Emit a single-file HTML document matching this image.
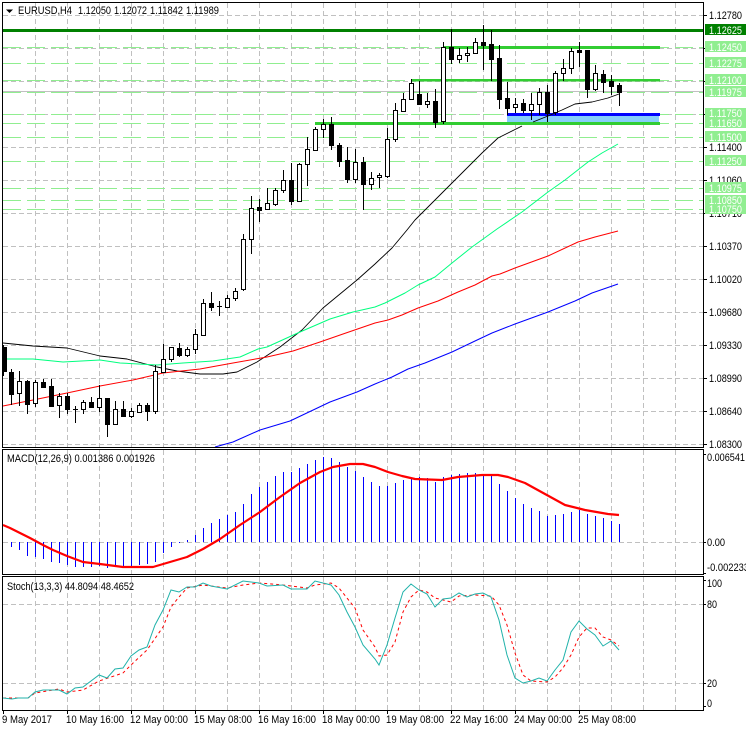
<!DOCTYPE html>
<html><head><meta charset="utf-8"><title>EURUSD,H4</title>
<style>
html,body{margin:0;padding:0;background:#fff;width:746px;height:731px;overflow:hidden}
svg{display:block}
text{font-family:"Liberation Sans",sans-serif;font-size:11px;fill:#000}
.w{fill:#fff}
</style></head><body>
<svg width="746" height="731" viewBox="0 0 746 731" xmlns="http://www.w3.org/2000/svg">
<rect width="746" height="731" fill="#fff"/>
<!-- grid -->
<g fill="none" stroke="#c0c0c0" stroke-dasharray="5 3" shape-rendering="crispEdges">
<path d="M35.5 3V447M67.5 3V447M99.5 3V447M131.5 3V447M163.5 3V447M195.5 3V447M227.5 3V447M259.5 3V447M291.5 3V447M323.5 3V447M355.5 3V447M387.5 3V447M419.5 3V447M451.5 3V447M483.5 3V447M515.5 3V447M547.5 3V447M579.5 3V447M611.5 3V447M643.5 3V447M675.5 3V447"/>
<path d="M35.5 450V574M67.5 450V574M99.5 450V574M131.5 450V574M163.5 450V574M195.5 450V574M227.5 450V574M259.5 450V574M291.5 450V574M323.5 450V574M355.5 450V574M387.5 450V574M419.5 450V574M451.5 450V574M483.5 450V574M515.5 450V574M547.5 450V574M579.5 450V574M611.5 450V574M643.5 450V574M675.5 450V574"/>
<path d="M35.5 577V710M67.5 577V710M99.5 577V710M131.5 577V710M163.5 577V710M195.5 577V710M227.5 577V710M259.5 577V710M291.5 577V710M323.5 577V710M355.5 577V710M387.5 577V710M419.5 577V710M451.5 577V710M483.5 577V710M515.5 577V710M547.5 577V710M579.5 577V710M611.5 577V710M643.5 577V710M675.5 577V710"/>
<path d="M3 15.5H703M3 48.5H703M3 81.5H703M3 114.5H703M3 147.5H703M3 180.5H703M3 213.5H703M3 246.5H703M3 279.5H703M3 312.5H703M3 345.5H703M3 378.5H703M3 411.5H703M3 444.5H703"/>
<path d="M3 542.5H703M3 604.5H703M3 683.5H703"/>
</g>
<!-- light green dashed levels -->
<path fill="none" stroke="#90ee90" stroke-dasharray="18 6" shape-rendering="crispEdges" d="M3 47.5H703M3 63.5H703M3 80.5H703M3 92.5H703M3 114.5H703M3 123.5H703M3 137.5H703M3 161.5H703M3 188.5H703M3 200.5H703M3 209.5H703"/>
<!-- bid line -->
<path stroke="#c0c0c0" shape-rendering="crispEdges" d="M3 91.5H703"/>
<!-- objects -->
<rect x="507" y="115" width="152" height="8" fill="#87cefa"/>
<rect x="3" y="29" width="700" height="3" fill="#008000"/>
<rect x="444" y="46" width="216" height="3" fill="#32cd32"/>
<rect x="411" y="79" width="249" height="2.5" fill="#32cd32"/>
<rect x="507" y="113" width="153" height="3" fill="#0000ff"/>
<rect x="315" y="122" width="345" height="3" fill="#32cd32"/>
<!-- moving averages -->
<g fill="none" stroke-linejoin="round">
<path stroke="#000" stroke-width="0.9" d="M3 343L33 346L67 348L100 356L127 359L157 367L177 371L200 374L223 374L237 372L257 362L280 347L302 330L323 308L357 280L375 264L392 248L407 230L415 220L433 202L455 180L482 153L498 138L522 126M533 122L548 116L562 110L575 104L592 102L608 98L619 94"/>
<path stroke="#00ff7f" stroke-width="1" d="M3 359L33 359L63 362L100 360L120 363L157 365L183 363L213 361L240 357L258 349L267 347L300 332L330 319L353 312L375 307L385 303L405 293L418 285L435 277L452 263L472 247L497 229L522 212L548 192L565 180L588 162L602 153L618 144"/>
<path stroke="#ff0000" stroke-width="1" d="M3 406L33 400L67 393L100 386L133 380L163 373L200 369L233 363L267 357L293 351L320 342L343 334L375 323L388 320L402 315L418 308L438 301L458 292L475 285L492 276L500 274L515 268L548 256L578 242L595 237L618 231"/>
<path stroke="#0000ff" stroke-width="1" d="M215 447L233 442L260 430L290 421L330 402L357 392L375 384L392 377L408 369L425 363L452 352L475 341L492 333L515 324L548 312L575 301L592 293L618 284"/>
</g>
<!-- candles -->
<g shape-rendering="crispEdges">
<path stroke="#000" fill="none" d="M3.5 345V376M11.5 369V405M19.5 371V406M27.5 380V414M35.5 380V407M43.5 379V387M51.5 379V407M59.5 393V418M67.5 393V414M75.5 406V423M83.5 400V414M91.5 397V408M99.5 385V412M107.5 398V437M115.5 401V425M123.5 401V417M131.5 408V418M139.5 403V412M147.5 403V421M155.5 365V414M163.5 344V373M171.5 347V362M179.5 343V357M187.5 347V357M195.5 329V354M203.5 299V336M211.5 292V311M219.5 301V316M227.5 295V308M235.5 288V301M243.5 234V291M251.5 196V254M259.5 199V222M267.5 188V210M275.5 188V206M283.5 170V193M291.5 163V205M299.5 163V202M307.5 137V186M315.5 127V151M323.5 119V138M331.5 117V150M339.5 143V167M347.5 147V183M355.5 149V183M363.5 157V210M371.5 172V190M379.5 173V188M387.5 128V178M395.5 103V142M403.5 93V112M411.5 79V100M419.5 81V105M427.5 93V108M435.5 89V128M443.5 42V124M451.5 29V64M459.5 48V63M467.5 47V62M475.5 38V53M483.5 25V70M491.5 30V81M499.5 45V109M507.5 82V115M515.5 98V113M523.5 99V113M531.5 93V120M539.5 88V115M547.5 85V122M555.5 71V115M563.5 59V81M571.5 48V74M579.5 42V67M587.5 50V98M595.5 65V91M603.5 70V93M611.5 75V95M619.5 83V106M73 409.5h5M217 306.5h5"/>
<rect x="3" y="347" width="4" height="25" fill="#000"/>
<path stroke="#000" fill="#000" d="M9.5 372.5h4v22h-4zM25.5 381.5h4v23h-4zM41.5 382.5h4v5h-4zM49.5 386.5h4v20h-4zM65.5 396.5h4v13h-4zM89.5 402.5h4v5h-4zM105.5 398.5h4v26h-4zM121.5 409.5h4v7h-4zM145.5 405.5h4v6h-4zM177.5 348.5h4v7h-4zM209.5 303.5h4v4h-4zM257.5 207.5h4v3h-4zM289.5 180.5h4v21h-4zM329.5 124.5h4v21h-4zM337.5 145.5h4v16h-4zM345.5 160.5h4v19h-4zM361.5 162.5h4v22h-4zM417.5 94.5h4v10h-4zM433.5 101.5h4v21h-4zM449.5 47.5h4v12h-4zM481.5 42.5h4v3h-4zM489.5 44.5h4v15h-4zM497.5 58.5h4v41h-4zM505.5 98.5h4v10h-4zM521.5 103.5h4v7h-4zM545.5 92.5h4v21h-4zM577.5 50.5h4v2h-4zM585.5 50.5h4v39h-4zM601.5 74.5h4v8h-4zM609.5 81.5h4v5h-4zM617.5 85.5h4v7h-4z"/>
<path stroke="#000" fill="#fff" d="M17.5 381.5h4v12h-4zM33.5 382.5h4v21h-4zM57.5 396.5h4v9h-4zM81.5 402.5h4v7h-4zM97.5 398.5h4v9h-4zM113.5 409.5h4v15h-4zM129.5 411.5h4v5h-4zM137.5 405.5h4v7h-4zM153.5 371.5h4v40h-4zM161.5 359.5h4v13h-4zM169.5 347.5h4v12h-4zM185.5 349.5h4v6h-4zM193.5 334.5h4v15h-4zM201.5 303.5h4v32h-4zM225.5 298.5h4v9h-4zM233.5 291.5h4v7h-4zM241.5 239.5h4v50h-4zM249.5 208.5h4v31h-4zM265.5 203.5h4v6h-4zM273.5 190.5h4v14h-4zM281.5 180.5h4v10h-4zM297.5 164.5h4v37h-4zM305.5 149.5h4v15h-4zM313.5 129.5h4v21h-4zM321.5 124.5h4v5h-4zM353.5 162.5h4v17h-4zM369.5 178.5h4v6h-4zM377.5 175.5h4v2h-4zM385.5 139.5h4v37h-4zM393.5 110.5h4v29h-4zM401.5 99.5h4v12h-4zM409.5 83.5h4v16h-4zM425.5 101.5h4v3h-4zM441.5 47.5h4v74h-4zM457.5 55.5h4v4h-4zM465.5 53.5h4v2h-4zM473.5 42.5h4v11h-4zM513.5 104.5h4v3h-4zM529.5 104.5h4v6h-4zM537.5 92.5h4v12h-4zM553.5 73.5h4v39h-4zM561.5 68.5h4v5h-4zM569.5 51.5h4v17h-4zM593.5 73.5h4v16h-4z"/>
</g>
<!-- MACD histogram -->
<path stroke="#0000ff" fill="none" shape-rendering="crispEdges" d="M11.5 542V547M19.5 542V550M27.5 542V556M35.5 542V557M43.5 542V559M51.5 542V562M59.5 542V563M67.5 542V565M75.5 542V567M83.5 542V567M91.5 542V567M99.5 542V566M107.5 542V568M115.5 542V566M123.5 542V566M131.5 542V566M139.5 542V565M147.5 542V564M155.5 542V562M163.5 542V553M171.5 542V547M179.5 542V543M187.5 540V542M195.5 535V542M203.5 528V542M211.5 523V542M219.5 519V542M227.5 515V542M235.5 512V542M243.5 504V542M251.5 494V542M259.5 487V542M267.5 482V542M275.5 476V542M283.5 472V542M291.5 472V542M299.5 468V542M307.5 464V542M315.5 460V542M323.5 457V542M331.5 458V542M339.5 462V542M347.5 467V542M355.5 471V542M363.5 477V542M371.5 482V542M379.5 486V542M387.5 486V542M395.5 483V542M403.5 480V542M411.5 478V542M419.5 477V542M427.5 478V542M435.5 482V542M443.5 477V542M451.5 475V542M459.5 474V542M467.5 473V542M475.5 473V542M483.5 474V542M491.5 475V542M499.5 484V542M507.5 491V542M515.5 498V542M523.5 504V542M531.5 508V542M539.5 511V542M547.5 516V542M555.5 515V542M563.5 514V542M571.5 512V542M579.5 510V542M587.5 514V542M595.5 516V542M603.5 518V542M611.5 521V542M619.5 524V542"/>
<!-- MACD signal -->
<path fill="none" stroke="#ff0000" stroke-width="2.2" stroke-linejoin="round" d="M3 525L10 528L20 533L30 538L43 545L53 550L67 556L83 562L100 564L123 567L153 567L170 562L187 557L203 549L220 539L240 525L260 512L280 497L300 483L320 472L333 467L350 464L363 464L375 467L388 472L402 476L415 479L442 480L458 477L482 475L498 475L508 477L525 483L545 494L565 505L585 510L608 514L619 515"/>
<!-- Stochastic -->
<path fill="none" stroke="#ff0000" stroke-width="1" stroke-dasharray="3 3" d="M3 698L28 698L35 693L59 689L67 692L83 690L99 681L123 673L131 665L147 650L163 627L171 607L179 597L187 588L203 585L227 588L243 585L259 583L283 585L307 588L315 585L331 583L339 588L355 608L363 630L375 647L379 656L387 655L395 642L403 612L411 597L419 590L427 592L435 598L451 602L459 596L475 595L491 596L499 605L507 625L515 653L523 675L531 681L547 682L555 677L563 668L571 655L579 637L587 628L595 628L603 637L611 640L619 646"/>
<path fill="none" stroke="#20b2aa" stroke-width="1" d="M3 698L12 699L18 698L28 698L35 692L43 690L59 690L67 694L75 688L83 687L99 675L107 678L115 669L123 668L131 656L139 650L147 647L155 625L163 610L171 590L179 592L187 587L195 587L203 583L211 586L227 589L243 581L259 583L267 586L283 585L291 589L307 589L315 581L331 585L339 595L347 612L355 627L363 645L375 659L379 665L387 645L395 618L403 592L411 584L419 590L427 594L435 607L443 599L451 598L459 593L467 597L475 594L483 593L491 597L499 620L507 655L515 678L523 683L531 681L539 678L547 681L555 670L563 660L571 632L579 621L587 629L595 635L603 646L611 641L619 650"/>
<!-- frames -->
<g shape-rendering="crispEdges" stroke="#000" fill="none">
<path d="M2.5 2.5H703.5V447.5H2.5Z"/>
<path d="M2.5 449.5H703.5V574.5H2.5Z"/>
<path d="M2.5 576.5H703.5V710.5H2.5Z"/>
<path d="M703 15.5h4M703 48.5h4M703 81.5h4M703 114.5h4M703 147.5h4M703 180.5h4M703 213.5h4M703 246.5h4M703 279.5h4M703 312.5h4M703 345.5h4M703 378.5h4M703 411.5h4M703 444.5h4M703 454.5h3M703 542.5h3M703 573.5h3M703 580.5h3M703 604.5h3M703 683.5h3M703 706.5h3"/>
<path d="M3.5 710v4M67.5 710v4M131.5 710v4M195.5 710v4M259.5 710v4M323.5 710v4M387.5 710v4M451.5 710v4M515.5 710v4M579.5 710v4"/>
</g>
<!-- header -->
<path d="M6 9.5h7l-3.5 3.5z" fill="#000"/>
<text x="18" y="14" textLength="54" lengthAdjust="spacingAndGlyphs">EURUSD,H4</text>
<text x="78" y="14" textLength="33" lengthAdjust="spacingAndGlyphs">1.12050</text>
<text x="114" y="14" textLength="33" lengthAdjust="spacingAndGlyphs">1.12072</text>
<text x="150" y="14" textLength="33" lengthAdjust="spacingAndGlyphs">1.11842</text>
<text x="186" y="14" textLength="33" lengthAdjust="spacingAndGlyphs">1.11989</text>
<!-- price axis -->
<g>
<text x="709" y="19" textLength="33" lengthAdjust="spacingAndGlyphs">1.12780</text>
<text x="709" y="151" textLength="33" lengthAdjust="spacingAndGlyphs">1.11400</text>
<text x="709" y="184" textLength="33" lengthAdjust="spacingAndGlyphs">1.11060</text>
<text x="709" y="217" textLength="33" lengthAdjust="spacingAndGlyphs">1.10710</text>
<text x="709" y="250" textLength="33" lengthAdjust="spacingAndGlyphs">1.10370</text>
<text x="709" y="283" textLength="33" lengthAdjust="spacingAndGlyphs">1.10020</text>
<text x="709" y="316" textLength="33" lengthAdjust="spacingAndGlyphs">1.09680</text>
<text x="709" y="349" textLength="33" lengthAdjust="spacingAndGlyphs">1.09330</text>
<text x="709" y="382" textLength="33" lengthAdjust="spacingAndGlyphs">1.08990</text>
<text x="709" y="415" textLength="33" lengthAdjust="spacingAndGlyphs">1.08640</text>
<text x="709" y="448" textLength="33" lengthAdjust="spacingAndGlyphs">1.08300</text>
</g>
<g fill="#90ee90">
<rect x="705" y="41" width="41" height="11"/>
<rect x="705" y="57" width="41" height="11"/>
<rect x="705" y="74" width="41" height="11"/>
<rect x="705" y="86" width="41" height="11"/>
<rect x="705" y="108" width="41" height="10"/>
<rect x="705" y="118" width="41" height="10"/>
<rect x="705" y="131" width="41" height="11"/>
<rect x="705" y="155" width="41" height="11"/>
<rect x="705" y="182" width="41" height="11"/>
<rect x="705" y="195" width="41" height="9"/>
<rect x="705" y="204" width="41" height="10"/>
</g>
<rect x="705" y="24" width="41" height="11" fill="#008000"/>
<g>
<text class="w" x="709" y="34" textLength="33" lengthAdjust="spacingAndGlyphs">1.12625</text>
<text class="w" x="709" y="51" textLength="33" lengthAdjust="spacingAndGlyphs">1.12450</text>
<text class="w" x="709" y="67" textLength="33" lengthAdjust="spacingAndGlyphs">1.12275</text>
<text class="w" x="709" y="84" textLength="33" lengthAdjust="spacingAndGlyphs">1.12100</text>
<text class="w" x="709" y="96" textLength="33" lengthAdjust="spacingAndGlyphs">1.11975</text>
<text class="w" x="709" y="117" textLength="33" lengthAdjust="spacingAndGlyphs">1.11750</text>
<text class="w" x="709" y="127" textLength="33" lengthAdjust="spacingAndGlyphs">1.11650</text>
<text class="w" x="709" y="141" textLength="33" lengthAdjust="spacingAndGlyphs">1.11500</text>
<text class="w" x="709" y="165" textLength="33" lengthAdjust="spacingAndGlyphs">1.11250</text>
<text class="w" x="709" y="192" textLength="33" lengthAdjust="spacingAndGlyphs">1.10975</text>
<text class="w" x="709" y="204" textLength="33" lengthAdjust="spacingAndGlyphs">1.10850</text>
<text class="w" x="709" y="213" textLength="33" lengthAdjust="spacingAndGlyphs">1.10750</text>
</g>
<!-- indicator labels -->
<text x="7" y="462" textLength="148" lengthAdjust="spacingAndGlyphs">MACD(12,26,9) 0.001386 0.001926</text>
<text x="7" y="590" textLength="127" lengthAdjust="spacingAndGlyphs">Stoch(13,3,3) 44.8094 48.4652</text>
<text x="707" y="461" textLength="38" lengthAdjust="spacingAndGlyphs">0.006541</text>
<text x="707" y="546" textLength="18" lengthAdjust="spacingAndGlyphs">0.00</text>
<text x="707" y="571" textLength="42" lengthAdjust="spacingAndGlyphs">-0.002233</text>
<text x="707" y="587" textLength="15" lengthAdjust="spacingAndGlyphs">100</text>
<text x="707" y="608" textLength="10" lengthAdjust="spacingAndGlyphs">80</text>
<text x="707" y="687" textLength="10" lengthAdjust="spacingAndGlyphs">20</text>
<text x="707" y="707" textLength="5" lengthAdjust="spacingAndGlyphs">0</text>
<!-- time axis -->
<text x="2" y="723" textLength="50" lengthAdjust="spacingAndGlyphs">9 May 2017</text>
<text x="66" y="723" textLength="58" lengthAdjust="spacingAndGlyphs">10 May 16:00</text>
<text x="130" y="723" textLength="58" lengthAdjust="spacingAndGlyphs">12 May 00:00</text>
<text x="194" y="723" textLength="58" lengthAdjust="spacingAndGlyphs">15 May 08:00</text>
<text x="258" y="723" textLength="58" lengthAdjust="spacingAndGlyphs">16 May 16:00</text>
<text x="322" y="723" textLength="58" lengthAdjust="spacingAndGlyphs">18 May 00:00</text>
<text x="386" y="723" textLength="58" lengthAdjust="spacingAndGlyphs">19 May 08:00</text>
<text x="450" y="723" textLength="58" lengthAdjust="spacingAndGlyphs">22 May 16:00</text>
<text x="514" y="723" textLength="58" lengthAdjust="spacingAndGlyphs">24 May 00:00</text>
<text x="578" y="723" textLength="58" lengthAdjust="spacingAndGlyphs">25 May 08:00</text>
</svg>
</body></html>
